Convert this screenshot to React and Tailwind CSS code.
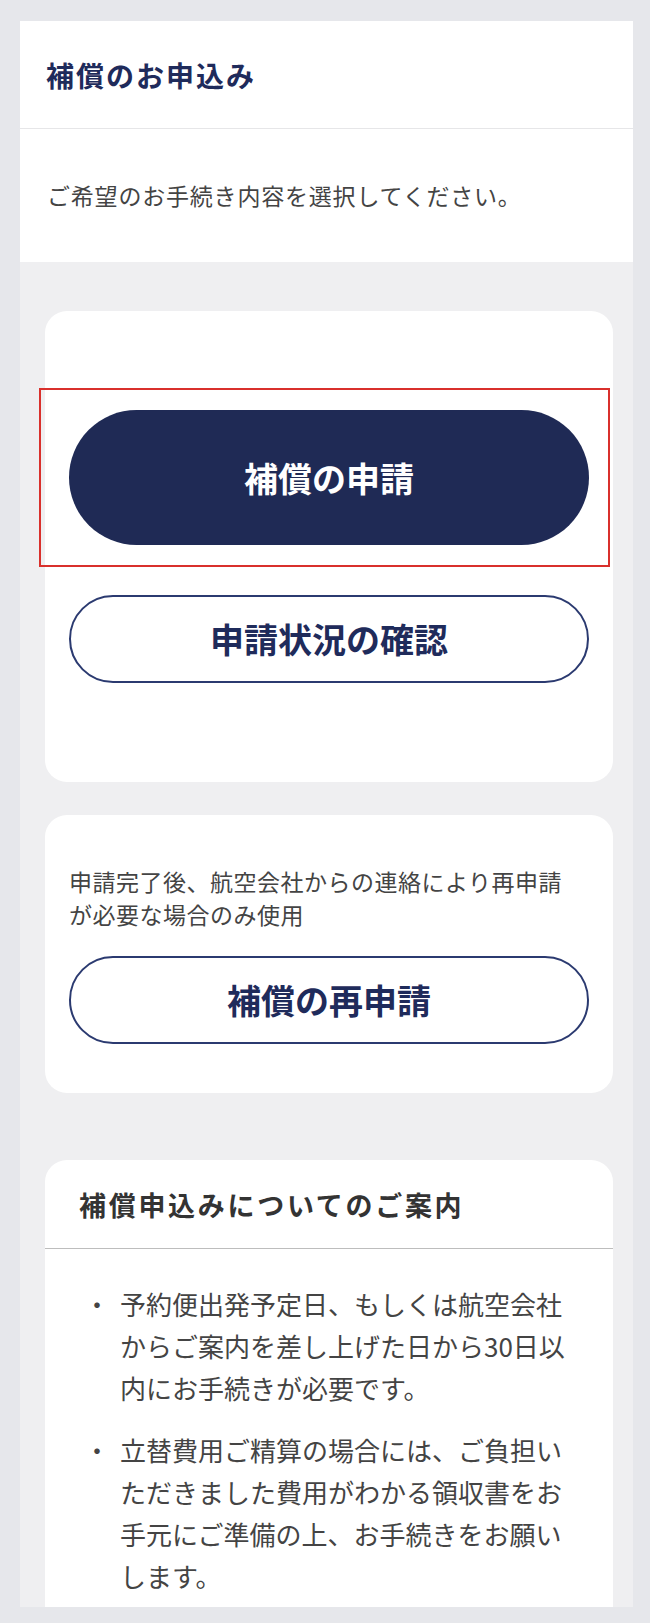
const NAVY = 'text-[#1f2b5b]'

function OutlineButton({ label }) {
  return (
    <button
      type="button"
      className={`w-full h-[88px] rounded-full border-2 border-[#2b3a70] bg-white ${NAVY} text-[34px] font-bold leading-none`}
    >
      {label}
    </button>
  )
}

function Card({ className = '', children }) {
  return <section className={`bg-white rounded-[22px] ${className}`}>{children}</section>
}

const notes = [
  '予約便出発予定日、もしくは航空会社からご案内を差し上げた日から30日以内にお手続きが必要です。',
  '立替費用ご精算の場合には、ご負担いただきました費用がわかる領収書をお手元にご準備の上、お手続きをお願いします。',
]

export default function App() {
  return (
    <div
      className="min-h-[1623px] bg-[#e6e7eb] pt-[21px]"
      style={{ fontFamily: '"Noto Sans CJK JP", "Noto Sans", sans-serif' }}
    >
      <main className="ml-[20px] w-[613px] h-[1586px] overflow-hidden bg-[#efeff1]">
        <header className="bg-white h-[108px] flex items-center px-[26px] border-b border-[#e6e6e8]">
          <h1 className={`${NAVY} text-[28px] font-bold tracking-[2px] leading-none`}>補償のお申込み</h1>
        </header>

        <div className="bg-white h-[133px] flex items-center px-[27px]">
          <p className="text-[#444] text-[23px] tracking-[0.8px] leading-none">ご希望のお手続き内容を選択してください。</p>
        </div>

        <div className="pt-[49px] pl-[25px] pr-[20px] flex flex-col">
          <Card className="py-[99px] px-[24px] flex flex-col gap-[50px]">
            <div className="relative">
              <button
                type="button"
                className="w-full h-[135px] rounded-full bg-[#1f2a55] text-white text-[34px] font-bold leading-none"
              >
                補償の申請
              </button>
              {/* annotation frame */}
              <div className="absolute -top-[22px] -bottom-[22px] -left-[30px] -right-[21px] border-2 border-[#d9302c] pointer-events-none" />
            </div>
            <OutlineButton label="申請状況の確認" />
          </Card>

          <Card className="mt-[33px] pt-[50px] pb-[49px] px-[24px]">
            <p className="text-[#444] text-[23px] tracking-[0.5px] leading-[33px] pr-[12px]">
              申請完了後、航空会社からの連絡により再申請が必要な場合のみ使用
            </p>
            <div className="mt-[25px]">
              <OutlineButton label="補償の再申請" />
            </div>
          </Card>

          <Card className="mt-[67px] rounded-b-none">
            <div className="h-[89px] flex items-center px-[34px] border-b border-[#bdbdbd]">
              <h2 className="text-[#333] text-[27px] font-bold tracking-[2.7px] leading-none">
                補償申込みについてのご案内
              </h2>
            </div>
            <ul className="pt-[34px] pl-[34px] pr-[38px] pb-[40px] flex flex-col gap-[20px]">
              {notes.map((note) => (
                <li key={note} className="flex text-[#444] text-[26px] leading-[42px]">
                  <span className="w-[36px] mr-[5px] shrink-0 text-center">・</span>
                  <span>{note}</span>
                </li>
              ))}
            </ul>
          </Card>
        </div>
      </main>
    </div>
  )
}
